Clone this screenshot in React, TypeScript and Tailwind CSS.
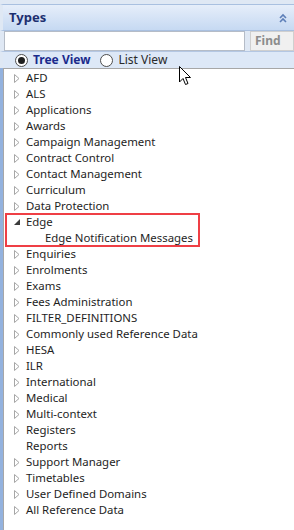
import React from "react";

type Item = { label: string; kind: "closed" | "open" | "leaf" | "child" };

const items: Item[] = [
  { label: "AFD", kind: "closed" },
  { label: "ALS", kind: "closed" },
  { label: "Applications", kind: "closed" },
  { label: "Awards", kind: "closed" },
  { label: "Campaign Management", kind: "closed" },
  { label: "Contract Control", kind: "closed" },
  { label: "Contact Management", kind: "closed" },
  { label: "Curriculum", kind: "closed" },
  { label: "Data Protection", kind: "closed" },
  { label: "Edge", kind: "open" },
  { label: "Edge Notification Messages", kind: "child" },
  { label: "Enquiries", kind: "closed" },
  { label: "Enrolments", kind: "closed" },
  { label: "Exams", kind: "closed" },
  { label: "Fees Administration", kind: "closed" },
  { label: "FILTER_DEFINITIONS", kind: "closed" },
  { label: "Commonly used Reference Data", kind: "closed" },
  { label: "HESA", kind: "closed" },
  { label: "ILR", kind: "closed" },
  { label: "International", kind: "closed" },
  { label: "Medical", kind: "closed" },
  { label: "Multi-context", kind: "closed" },
  { label: "Registers", kind: "closed" },
  { label: "Reports", kind: "leaf" },
  { label: "Support Manager", kind: "closed" },
  { label: "Timetables", kind: "closed" },
  { label: "User Defined Domains", kind: "closed" },
  { label: "All Reference Data", kind: "closed" },
];

function Arrow({ kind }: { kind: Item["kind"] }) {
  if (kind === "closed")
    return (
      <svg width="6" height="9" viewBox="0 0 6 9" className="shrink-0">
        <path d="M0.5 0.5 L5 4.5 L0.5 8.5 Z" fill="white" stroke="#a6a6a6" />
      </svg>
    );
  if (kind === "open")
    return (
      <svg width="6" height="6" viewBox="0 0 6 6" className="shrink-0">
        <path d="M6 0 L6 6 L0 6 Z" fill="#3c3c3c" />
      </svg>
    );
  return <span className="w-[6px] shrink-0" />;
}

function Radio({ checked }: { checked: boolean }) {
  return (
    <span className="w-[13px] h-[13px] rounded-full border border-[#4d4d4d] bg-white flex items-center justify-center shrink-0">
      {checked && <span className="w-[7px] h-[7px] rounded-full bg-[#1f1f1f]" />}
    </span>
  );
}

export default function App() {
  return (
    <div
      className="relative w-[294px] h-[530px] overflow-hidden bg-white text-[11.4px]"
      style={{ fontFamily: '"Noto Sans", "Open Sans", sans-serif' }}
    >
      <div className="h-[4px] bg-[#dfe8f4]" />
      {/* header */}
      <div className="h-[27px] flex items-center justify-between border-t border-b border-[#a9c0e0] border-l-[3px] border-l-[#dfe8f4] bg-gradient-to-b from-[#e6eefa] to-[#c6d9f2] pl-[6px] pr-[6px]">
        <span className="font-bold text-[13px] text-[#1c2f70]">Types</span>
        <svg width="10" height="10" viewBox="0 0 10 10">
          <path d="M2 5 L5 2 L8 5 M2 9 L5 6 L8 9" fill="none" stroke="#5d7fb8" strokeWidth="1.6" />
        </svg>
      </div>
      {/* search */}
      <div className="h-[20px] flex bg-[#dfe8f4] pl-[4px]">
        <div className="flex-1 bg-white border border-[#b5bcc7]" />
        <div className="w-[5px]" />
        <div className="w-[44px] bg-[#f0f0f0] border border-[#cfcfcf] flex items-center pl-[4px] text-[12px] text-[#8c8c8c] font-bold">
          Find
        </div>
      </div>
      {/* view switch */}
      <div className="h-[17px] flex items-center bg-[#dde8f7] border-t border-[#b4c7e3] border-l-[3px] border-l-[#dfe8f4] pl-[12px] text-[12px]">
        <Radio checked />
        <span className="ml-[5px] font-bold text-[#1a2a8c]">Tree View</span>
        <span className="ml-[10px]"><Radio checked={false} /></span>
        <span className="ml-[5px] text-[#2a2a2a]">List View</span>
      </div>
      {/* tree */}
      <div className="flex h-[462px]">
        <div className="w-[3px] bg-[#93b2de]" />
        <div className="flex-1 border-l border-t border-[#a7a7a7] pt-[1px]">
          {items.map((it) => (
            <div key={it.label} className="h-[16px] flex items-center text-[#1e1e1e]">
              <span className="w-[10px]" />
              <Arrow kind={it.kind} />
              <span className={it.kind === "child" ? "ml-[25px]" : "ml-[6px]"}>{it.label}</span>
            </div>
          ))}
        </div>
      </div>
      {/* highlight annotation */}
      <div className="absolute left-[5px] top-[213px] w-[195px] h-[34px] border-2 border-[#ef3f45]" />
      {/* cursor */}
      <svg className="absolute left-[179px] top-[66px]" width="13" height="21" viewBox="0 0 13 21">
        <path d="M0.5 0.5 L0.5 16 L4 12.5 L6.5 18.5 L9 17.5 L6.5 11.5 L11.5 11.5 Z" fill="white" stroke="black" strokeWidth="1" strokeLinejoin="round" />
      </svg>
    </div>
  );
}
